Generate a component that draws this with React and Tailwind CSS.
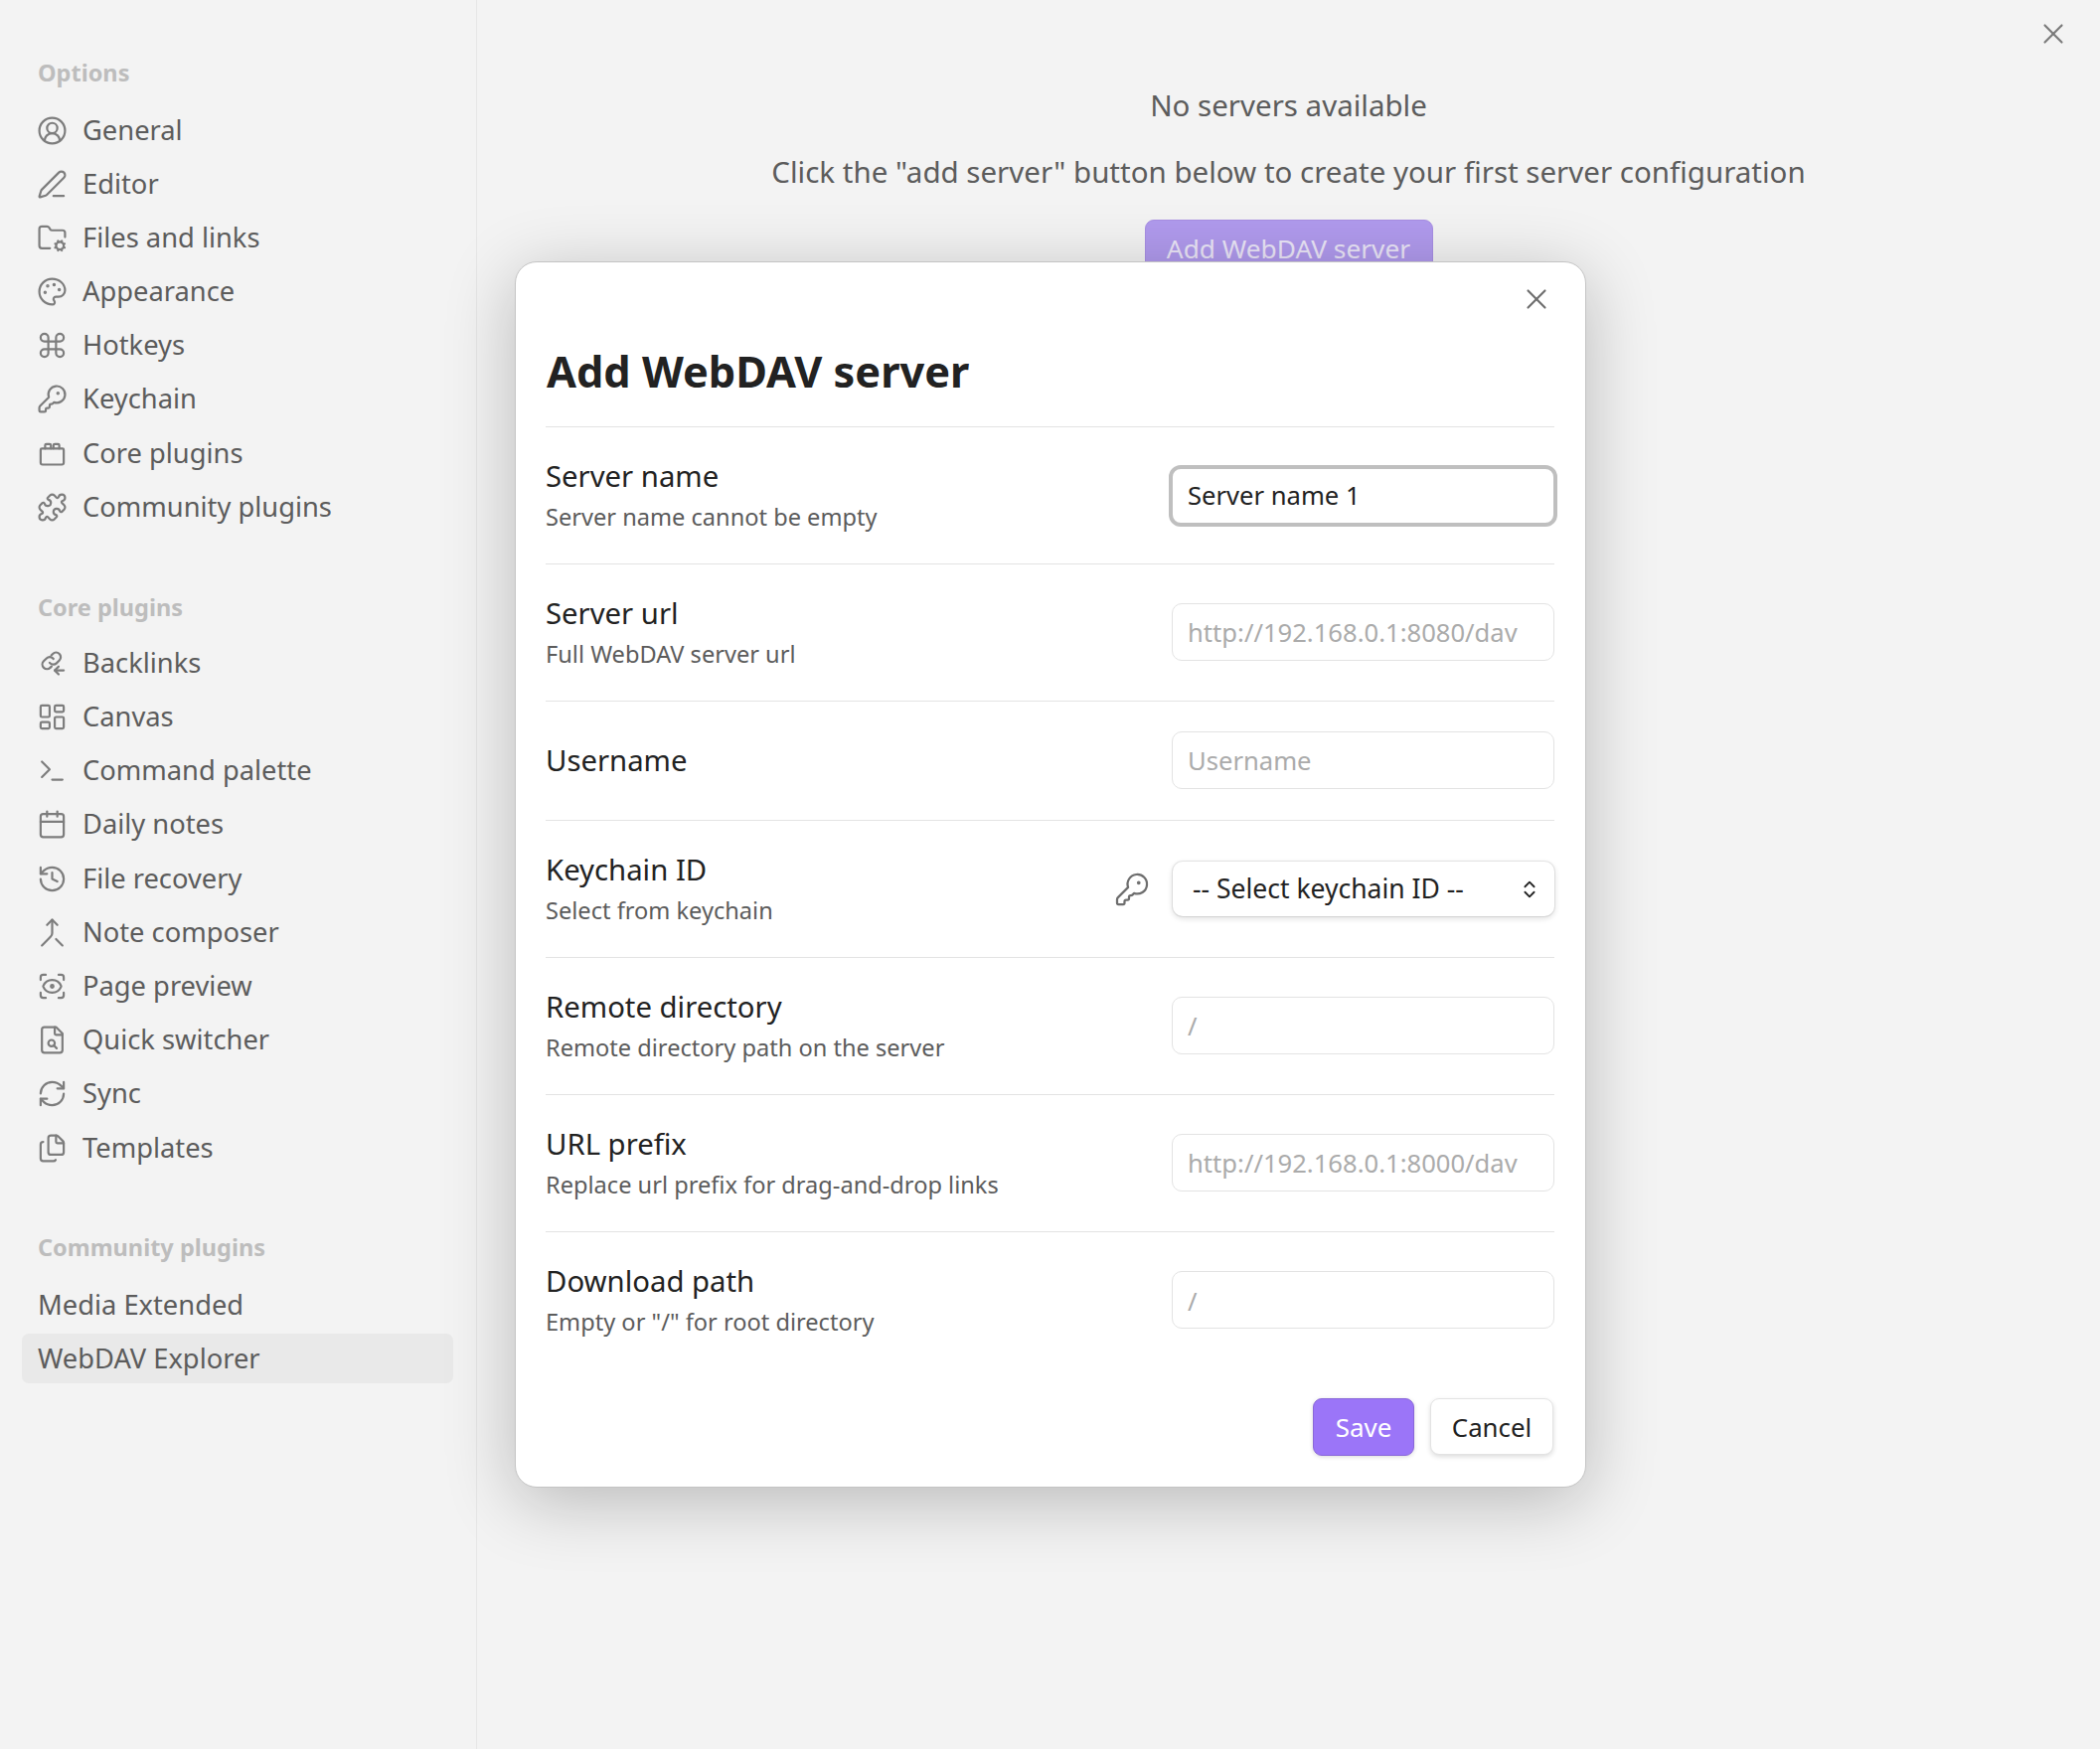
import React from "react";
import {
  CircleUserRound, PenLine, FolderCog, Palette, Command, KeyRound, Puzzle, LayoutDashboard,
  Terminal, Calendar, History, Merge, ScanEye, RefreshCw, Files, X, ChevronsUpDown,
} from "lucide-react";

function LegoIcon(props) {
  return (
    <svg viewBox="0 0 24 24" fill="none" stroke="currentColor" strokeLinecap="round" strokeLinejoin="round" {...props}>
      <path d="M3 9a1 1 0 0 1 1-1h16a1 1 0 0 1 1 1v10a1.5 1.5 0 0 1-1.5 1.5h-15A1.5 1.5 0 0 1 3 19z" />
      <path d="M6.5 8V5.5a1 1 0 0 1 1-1h2.5a1 1 0 0 1 1 1V8" />
      <path d="M13 8V5.5a1 1 0 0 1 1-1h2.5a1 1 0 0 1 1 1V8" />
    </svg>
  );
}

function BacklinkIcon(props) {
  return (
    <svg viewBox="0 0 24 24" fill="none" stroke="currentColor" strokeLinecap="round" strokeLinejoin="round" {...props}>
      <path d="M10 11.5a3.6 3.6 0 0 0 5.4.4l2.2-2.2a3.6 3.6 0 0 0-5.1-5.1l-1.2 1.2" />
      <path d="M13 8.5a3.6 3.6 0 0 0-5.4-.4l-2.2 2.2a3.6 3.6 0 0 0 5.1 5.1l1-1" />
      <path d="M21 17.5h-7" />
      <path d="m17 14.5-3 3 3 3" />
    </svg>
  );
}

function QuickSwitchIcon(props) {
  return (
    <svg viewBox="0 0 24 24" fill="none" stroke="currentColor" strokeLinecap="round" strokeLinejoin="round" {...props}>
      <path d="M4 4a2 2 0 0 1 2-2h9l5 5v13a2 2 0 0 1-2 2H6a2 2 0 0 1-2-2z" />
      <path d="M14 2v5a1 1 0 0 0 1 1h5" />
      <circle cx="11.5" cy="14.5" r="2.5" />
      <path d="m15.5 18.5-2.2-2.2" />
    </svg>
  );
}

const optionItems = [
  ["General", CircleUserRound], ["Editor", PenLine], ["Files and links", FolderCog], ["Appearance", Palette],
  ["Hotkeys", Command], ["Keychain", KeyRound], ["Core plugins", LegoIcon], ["Community plugins", Puzzle],
];

const coreItems = [
  ["Backlinks", BacklinkIcon], ["Canvas", LayoutDashboard], ["Command palette", Terminal], ["Daily notes", Calendar],
  ["File recovery", History], ["Note composer", Merge], ["Page preview", ScanEye], ["Quick switcher", QuickSwitchIcon],
  ["Sync", RefreshCw], ["Templates", Files],
];

function NavItem({ label, icon: Icon }) {
  return (
    <div className="flex h-[50px] items-center pl-[37px]">
      <Icon className="mr-[15px] h-[31px] w-[31px] text-[#7d7d7d]" strokeWidth={1.7} />
      <span className="text-[27.3px] text-[#5c5c5c]">{label}</span>
    </div>
  );
}

function NavGroup({ title, listGap, children, className }) {
  return (
    <div className={className}>
      <div className="flex h-[40px] items-center pl-[38px] text-[23.5px] font-bold text-[#bdbdbd]">{title}</div>
      <div className={`flex flex-col gap-[4.2px] ${listGap}`}>{children}</div>
    </div>
  );
}

function Row({ name, desc, height, last, children }) {
  return (
    <div className={`flex items-center justify-between ${height} ${last ? "" : "border-b border-[#e3e3e3]"}`}>
      <div className="pb-[1px]">
        <div className="text-[29.3px] leading-[36px] text-[#222222]">{name}</div>
        {desc && <div className="mt-[7px] text-[23.6px] leading-[32px] text-[#5c5c5c]">{desc}</div>}
      </div>
      {children}
    </div>
  );
}

function Field({ placeholder }) {
  return (
    <div className="mb-[2px] flex h-[58px] w-[385px] items-center rounded-[10px] border border-[#e3e3e3] bg-white px-[15px] pt-[4px] text-[25.6px] text-[#ababab]">
      {placeholder}
    </div>
  );
}

export default function App() {
  return (
    <div className="relative flex h-[1760px] w-[2113px] overflow-hidden bg-[#f3f3f3] font-['Noto_Sans',sans-serif]">
      {/* Sidebar */}
      <aside className="h-full w-[480px] shrink-0 border-r border-[#e6e6e6] pt-[54px] pr-[23px] pl-[22px]">
        <div className="ml-[-22px]">
          <NavGroup title="Options" listGap="mt-[12px]">
            {optionItems.map(([label, icon]) => <NavItem key={label} label={label} icon={icon} />)}
          </NavGroup>
          <NavGroup title="Core plugins" className="mt-[56px]" listGap="mt-[11px]">
            {coreItems.map(([label, icon]) => <NavItem key={label} label={label} icon={icon} />)}
          </NavGroup>
        </div>
        <div className="mt-[56px]">
          <div className="flex h-[40px] items-center pl-[16px] text-[23.5px] font-bold text-[#bdbdbd]">Community plugins</div>
          <div className="mt-[12px] flex flex-col gap-[4.2px]">
            <div className="flex h-[50px] items-center rounded-[7px] pl-[16px] text-[27.3px] text-[#5c5c5c]">Media Extended</div>
            <div className="flex h-[50px] items-center rounded-[7px] bg-[#e9e9e9] pl-[16px] text-[27.3px] text-[#5c5c5c]">WebDAV Explorer</div>
          </div>
        </div>
      </aside>

      {/* Main pane */}
      <main className="flex flex-1 flex-col items-center pt-[88px] text-[#5c5c5c]">
        <div className="text-[29.5px] leading-[36px]">No servers available</div>
        <div className="mt-[31px] text-[29.5px] leading-[36px]">Click the "add server" button below to create your first server configuration</div>
        <div className="mt-[30px] flex h-[58px] w-[290px] items-start justify-center rounded-[9px] border border-[#a88fe4] bg-[#b09aed] pt-[10px] text-[26.3px] leading-[36px] text-[#ebe6f8]">
          Add WebDAV server
        </div>
      </main>

      <X className="absolute top-[17px] right-[30px] h-[34px] w-[34px] text-[#7a7a7a]" strokeWidth={1.5} />

      {/* Modal */}
      <div className="absolute top-[263px] left-[518px] h-[1234px] w-[1078px] rounded-[22px] border border-[#c4c4c4] bg-white pr-[31px] pl-[30px] shadow-[0_14px_70px_rgba(0,0,0,0.24)]">
        <X className="absolute top-[20px] right-[32px] h-[34px] w-[34px] text-[#6e6e6e]" strokeWidth={1.5} />
        <h2 className="flex h-[166px] items-end border-b border-[#e3e3e3] pb-[29px] pl-[1px] text-[43.3px] leading-[52px] font-bold text-[#222222]">
          Add WebDAV server
        </h2>
        <Row name="Server name" desc="Server name cannot be empty" height="h-[138px]">
          <div className="mr-[-3px] flex h-[62px] w-[391px] items-center rounded-[12px] border-[4px] border-[#bfbfbf] bg-white pt-[2px] pr-[13px] pl-[15px] text-[25.6px] text-[#222222]">
            Server name 1
          </div>
        </Row>
        <Row name="Server url" desc="Full WebDAV server url" height="h-[138px]">
          <Field placeholder="http://192.168.0.1:8080/dav" />
        </Row>
        <Row name="Username" height="h-[120px]">
          <Field placeholder="Username" />
        </Row>
        <Row name="Keychain ID" desc="Select from keychain" height="h-[138px]">
          <div className="flex items-center">
            <KeyRound className="mr-[23px] h-[36px] w-[36px] text-[#6e6e6e]" strokeWidth={1.5} />
            <div className="flex h-[55px] w-[384px] items-center justify-between rounded-[10px] bg-white pr-[14px] pl-[20px] text-[26.5px] text-[#222222] shadow-[0_0_0_1px_rgba(0,0,0,0.08),0_2px_6px_rgba(0,0,0,0.14)]">
              -- Select keychain ID --
              <ChevronsUpDown className="h-[22px] w-[22px] text-[#222222]" strokeWidth={2} />
            </div>
          </div>
        </Row>
        <Row name="Remote directory" desc="Remote directory path on the server" height="h-[138px]">
          <Field placeholder="/" />
        </Row>
        <Row name="URL prefix" desc="Replace url prefix for drag-and-drop links" height="h-[138px]">
          <Field placeholder="http://192.168.0.1:8000/dav" />
        </Row>
        <Row name="Download path" desc={'Empty or "/" for root directory'} height="h-[138px]" last>
          <Field placeholder="/" />
        </Row>
        <div className="mt-[29px] flex justify-end gap-[16px] pr-[1px]">
          <div className="flex h-[58px] w-[102px] items-center justify-center rounded-[9px] border border-[#8a68d9] bg-[#9b75f8] text-[26px] text-white shadow-[0_1px_4px_rgba(0,0,0,0.15)]">
            Save
          </div>
          <div className="flex h-[57px] w-[124px] items-center justify-center rounded-[9px] border border-[#e3e3e3] bg-white pt-[1px] text-[25.8px] text-[#222222] shadow-[0_2px_5px_rgba(0,0,0,0.14)]">
            Cancel
          </div>
        </div>
      </div>
    </div>
  );
}
